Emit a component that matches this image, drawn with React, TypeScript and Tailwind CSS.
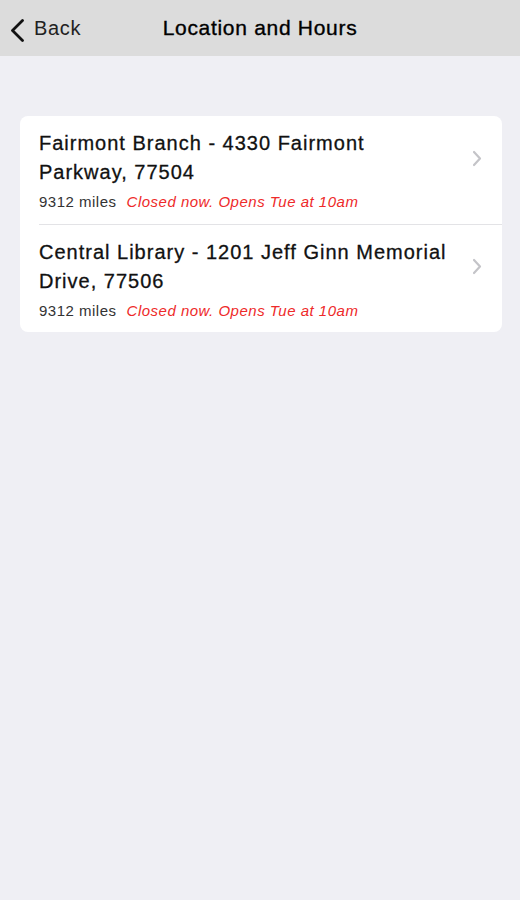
import React from "react";

const rows = [
  { title: "Fairmont Branch - 4330 Fairmont Parkway, 77504" },
  { title: "Central Library - 1201 Jeff Ginn Memorial Drive, 77506" },
];

export default function App() {
  return (
    <div
      className="w-[520px] h-[900px] bg-[#efeff4] flex flex-col"
      style={{ fontFamily: '"Liberation Sans", Arial, sans-serif' }}
    >
      <div className="h-14 bg-[#dcdcdc] relative flex items-center">
        <div className="flex items-center pl-[10px] gap-[9px] text-[#111] z-10">
          <svg width="15" height="24" viewBox="0 0 15 24" fill="none" className="mt-[5px]">
            <path d="M12.5 1.5 L2.5 11.5 L12.5 21.5" stroke="#111" strokeWidth="2.8" strokeLinecap="round" strokeLinejoin="round" />
          </svg>
          <span className="text-[20px] tracking-[0.7px] text-[#222]">Back</span>
        </div>
        <div className="absolute inset-0 flex items-center justify-center">
          <span className="text-[21px] tracking-[0.7px] text-[#000] [-webkit-text-stroke:0.35px_#000]">Location and Hours</span>
        </div>
      </div>
      <div className="pt-[60px] pl-5 pr-[18px]">
        <div className="bg-white rounded-[8px] overflow-hidden">
          {rows.map((r, i) => (
            <div key={i} className="flex pl-[19px]">
              <div className={`flex-1 flex flex-col justify-center pr-[20px] h-[108px] ${i > 0 ? "border-t border-[#e3e3e6]" : ""}`}>
                <div className="flex items-center">
                  <div className="flex-1 pr-6 text-[20px] leading-[29px] tracking-[1px] text-[#111] [-webkit-text-stroke:0.3px_#111]">{r.title}</div>
                  <svg width="10" height="17" viewBox="0 0 10 17" fill="none">
                    <path d="M2 2 L8 8.5 L2 15" stroke="#c4c4c8" strokeWidth="2.2" strokeLinecap="round" strokeLinejoin="round" />
                  </svg>
                </div>
                <div className="flex items-baseline gap-[10px] mt-[6px] text-[15px] leading-[18px] tracking-[0.5px]">
                  <span className="text-[#333]">9312 miles</span>
                  <span className="italic text-[#ee2a2a]">Closed now. Opens Tue at 10am</span>
                </div>
              </div>
            </div>
          ))}
        </div>
      </div>
    </div>
  );
}
